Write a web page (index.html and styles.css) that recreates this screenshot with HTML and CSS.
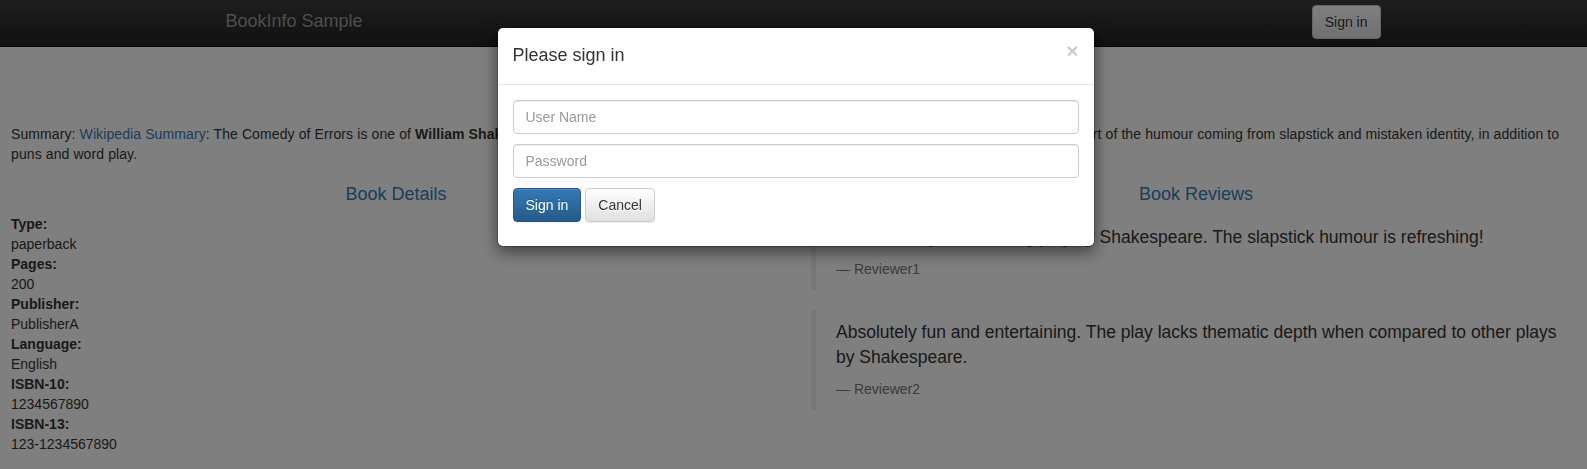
FILE: index.html
```html
<!DOCTYPE html>
<html lang="en">
<head>
    <meta charset="UTF-8">
    <meta name="viewport" content="width=device-width, initial-scale=1.0">
    <title>Simple Bookstore App</title>
    <link rel="stylesheet" href="styles.css">
</head>
<body class="modal-open">

    <nav class="navbar">
        <div class="navbar-container">
            <a class="navbar-brand" href="#">BookInfo Sample</a>
            <button type="button" class="btn btn-default navbar-btn">Sign in</button>
        </div>
    </nav>

    <div class="page">
        <div class="summary">
            <h3 class="title">The Comedy of Errors</h3>
            <p>Summary: <a href="#">Wikipedia Summary</a>: The Comedy of Errors is one of <b>William Shakespeare's</b> early plays. It is his shortest and one of his most farcical comedies, with a major part of the humour coming from slapstick and mistaken identity, in addition to puns and word play.</p>
        </div>

        <div class="columns">
            <div class="col">
                <h4 class="section-title">Book Details</h4>
                <dl class="details">
                    <dt>Type:</dt><dd>paperback</dd>
                    <dt>Pages:</dt><dd>200</dd>
                    <dt>Publisher:</dt><dd>PublisherA</dd>
                    <dt>Language:</dt><dd>English</dd>
                    <dt>ISBN-10:</dt><dd>1234567890</dd>
                    <dt>ISBN-13:</dt><dd>123-1234567890</dd>
                </dl>
            </div>

            <div class="col">
                <h4 class="section-title">Book Reviews</h4>
                <blockquote class="review">
                    <p>An extremely entertaining play by Shakespeare. The slapstick humour is refreshing!</p>
                    <small>Reviewer1</small>
                </blockquote>
                <blockquote class="review">
                    <p>Absolutely fun and entertaining. The play lacks thematic depth when compared to other plays by Shakespeare.</p>
                    <small>Reviewer2</small>
                </blockquote>
            </div>
        </div>
    </div>

    <!-- login dialog, open -->
    <div class="modal-backdrop"></div>
    <div class="modal">
        <div class="modal-dialog">
            <div class="modal-header">
                <button type="button" class="close">&times;</button>
                <h4 class="modal-title">Please sign in</h4>
            </div>
            <div class="modal-body">
                <form class="login-form">
                    <input type="text" class="form-control" placeholder="User Name">
                    <input type="password" class="form-control" placeholder="Password">
                    <div class="form-actions">
                        <button type="submit" class="btn btn-primary">Sign in</button>
                        <button type="button" class="btn btn-default">Cancel</button>
                    </div>
                </form>
            </div>
        </div>
    </div>

</body>
</html>
```

FILE: styles.css
```css
* {
    box-sizing: border-box;
}

body {
    margin: 0;
    font-family: "Liberation Sans", Arial, sans-serif;
    font-size: 14px;
    line-height: 1.42857;
    color: #333;
    background: #fff;
}

body.modal-open {
    overflow: hidden;
}

a {
    color: #337ab7;
    text-decoration: none;
}

/* top bar */
.navbar {
    height: 47px;
    margin-bottom: 22px;
    background: linear-gradient(to bottom, #3c3c3c 0, #222 100%);
    border-bottom: 1px solid #080808;
}

.navbar-container {
    width: 1174px;
    margin: 0 auto;
    padding-left: 19px;
    display: flex;
    justify-content: space-between;
    align-items: flex-start;
}

.navbar-brand {
    padding-top: 11px;
    font-size: 18px;
    line-height: 20px;
    color: #9d9d9d;
    text-shadow: 0 1px 0 rgba(0, 0, 0, .25);
}

.navbar-btn {
    margin-top: 5px;
}

/* buttons */
.btn {
    display: inline-block;
    padding: 6px 12px;
    font-family: inherit;
    font-size: 14px;
    line-height: 20px;
    border: 1px solid transparent;
    border-radius: 4px;
    cursor: pointer;
}

.btn-default {
    color: #333;
    background: linear-gradient(to bottom, #fff 0, #e0e0e0 100%);
    border-color: #ccc;
    text-shadow: 0 1px 0 #fff;
    box-shadow: inset 0 1px 0 rgba(255, 255, 255, .15), 0 1px 1px rgba(0, 0, 0, .075);
}

.btn-primary {
    color: #fff;
    background: linear-gradient(to bottom, #337ab7 0, #265a88 100%);
    border-color: #245580;
    text-shadow: 0 -1px 0 rgba(0, 0, 0, .2);
    box-shadow: inset 0 1px 0 rgba(255, 255, 255, .15), 0 1px 1px rgba(0, 0, 0, .075);
}

/* page content */
.page {
    display: flow-root;
    padding: 0 6px 0 11px;
}

.title {
    margin: 20px 0 10px;
    font-size: 24px;
    font-weight: 500;
    line-height: 1.1;
    text-align: center;
    color: #337ab7;
}

.summary p {
    margin: 0 0 10px;
    letter-spacing: .1px;
}

.columns {
    display: grid;
    grid-template-columns: 1fr 1fr;
    column-gap: 30px;
}

.section-title {
    margin: 10px 0;
    font-size: 18px;
    font-weight: 500;
    line-height: 1.1;
    text-align: center;
    color: #337ab7;
}

.details {
    margin: 0 0 20px;
}

.details dt {
    font-weight: bold;
}

.details dd {
    margin: 0;
}

.review {
    margin: 0 0 20px;
    padding: 10px 20px;
    font-size: 17.5px;
    border-left: 5px solid #eee;
}

.review p {
    margin: 0 0 10px;
}

.review small {
    display: block;
    font-size: 80%;
    line-height: 1.42857;
    color: #777;
}

.review small::before {
    content: "\2014 \00A0";
}

/* modal */
.modal-backdrop {
    position: fixed;
    top: 0;
    right: 0;
    bottom: 0;
    left: 0;
    z-index: 1040;
    background: #000;
    opacity: .5;
}

.modal {
    position: fixed;
    top: 0;
    right: 0;
    bottom: 0;
    left: 0;
    z-index: 1050;
    padding-left: 4px;
}

.modal-dialog {
    width: 598px;
    margin: 27px auto 0;
    background: #fff;
    background-clip: padding-box;
    border: 1px solid rgba(0, 0, 0, .2);
    border-radius: 6px;
    box-shadow: 0 5px 15px rgba(0, 0, 0, .5);
}

.modal-header {
    padding: 15px;
    border-bottom: 1px solid #e5e5e5;
}

.modal-title {
    margin: 0;
    font-size: 18px;
    font-weight: 500;
    line-height: 1.42857;
}

.close {
    float: right;
    margin-top: -3px;
    padding: 0;
    font-family: inherit;
    font-size: 21px;
    font-weight: bold;
    line-height: 1;
    color: #000;
    text-shadow: 0 1px 0 #fff;
    background: none;
    border: 0;
    opacity: .2;
    cursor: pointer;
}

.modal-body {
    padding: 15px 15px 24px;
}

.login-form {
    display: flex;
    flex-direction: column;
    gap: 10px;
}

.form-control {
    display: block;
    width: 100%;
    height: 34px;
    padding: 6px 12px;
    font-family: inherit;
    font-size: 14px;
    line-height: 20px;
    color: #555;
    background: #fff;
    border: 1px solid #ccc;
    border-radius: 4px;
    box-shadow: inset 0 1px 1px rgba(0, 0, 0, .075);
}

.form-control::placeholder {
    color: #999;
}

.form-actions {
    display: flex;
    gap: 4px;
}
```
